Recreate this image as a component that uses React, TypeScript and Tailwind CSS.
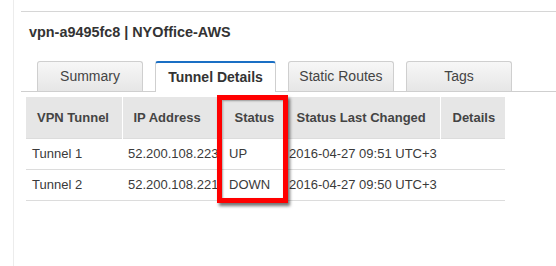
const tabs = [
	{ label: "Summary", w: "w-[106px]" },
	{ label: "Tunnel Details", w: "w-[121px]", active: true },
	{ label: "Static Routes", w: "w-[106px]" },
	{ label: "Tags", w: "w-[106px]" },
];

const rows = [
	{ tunnel: "Tunnel 1", ip: "52.200.108.223", status: "UP", changed: "2016-04-27 09:51 UTC+3" },
	{ tunnel: "Tunnel 2", ip: "52.200.108.221", status: "DOWN", changed: "2016-04-27 09:50 UTC+3" },
];

export default function App() {
	return (
		<div
			className="flex h-[266px] w-[556px] overflow-hidden bg-white text-[#333]"
			style={{ fontFamily: '"Liberation Sans", Arial, sans-serif' }}
		>
			<div className="w-[14px] shrink-0 border-r border-[#ececec]" />
			<div className="flex-1 pl-[7px] pt-[11px]">
				<div className="border-t border-[#d6d6d6]">
					<div className="pl-[8px] pt-[12px] text-[14.4px] font-bold leading-[16px] text-[#333]">
						vpn-a9495fc8 | NYOffice-AWS
					</div>
					<div className="mt-[21px] flex items-end gap-[12px] border-b border-[#cfcfcf] pl-[16px]">
						{tabs.map((t) =>
							t.active ? (
								<div
									key={t.label}
									className={`${t.w} -mb-px flex h-[31px] items-center justify-center rounded-t-[3px] border-x border-t-2 border-x-[#cfcfcf] border-t-[#1a6fc4] bg-white text-[14px] font-bold text-[#333]`}
								>
									{t.label}
								</div>
							) : (
								<div
									key={t.label}
									className={`${t.w} flex h-[30px] items-center justify-center rounded-t-[3px] border-x border-t border-[#cfcfcf] bg-gradient-to-b from-[#f7f7f7] to-[#e6e6e6] text-[14px] text-[#444]`}
								>
									{t.label}
								</div>
							),
						)}
					</div>
					<div className="relative ml-[5px] mt-[5px] w-[479px]">
						<table className="w-full border-collapse text-left text-[13px]">
							<thead>
								<tr className="h-[41px] bg-[#e6e6e6] text-[13px] font-bold text-[#444]">
									<th className="w-[96px] border-r border-white pl-[11px] font-bold">VPN Tunnel</th>
									<th className="w-[100px] border-r border-white pl-[11px] font-bold">IP Address</th>
									<th className="w-[62px] border-r border-white pl-[12px] font-bold">Status</th>
									<th className="w-[156px] border-r border-white pl-[12px] font-bold">Status Last Changed</th>
									<th className="pl-[12px] font-bold">Details</th>
								</tr>
							</thead>
							<tbody>
								{rows.map((r) => (
									<tr key={r.tunnel} className="h-[31px] border-t border-[#dcdcdc] text-[#3a3a3a]">
										<td className="pl-[6px]">{r.tunnel}</td>
										<td className="pl-[6px]">{r.ip}</td>
										<td className="pl-[7px]">{r.status}</td>
										<td className="pl-[5px]">{r.changed}</td>
										<td />
									</tr>
								))}
								<tr className="border-t border-[#dcdcdc]" />
							</tbody>
						</table>
						<div className="pointer-events-none absolute left-[191px] top-[-2px] h-[108px] w-[71px] border-[5px] border-[#f00] shadow-[2px_3px_3px_rgba(0,0,0,0.55),inset_1px_1px_2px_rgba(0,0,0,0.35)]" />
					</div>
				</div>
			</div>
		</div>
	);
}
